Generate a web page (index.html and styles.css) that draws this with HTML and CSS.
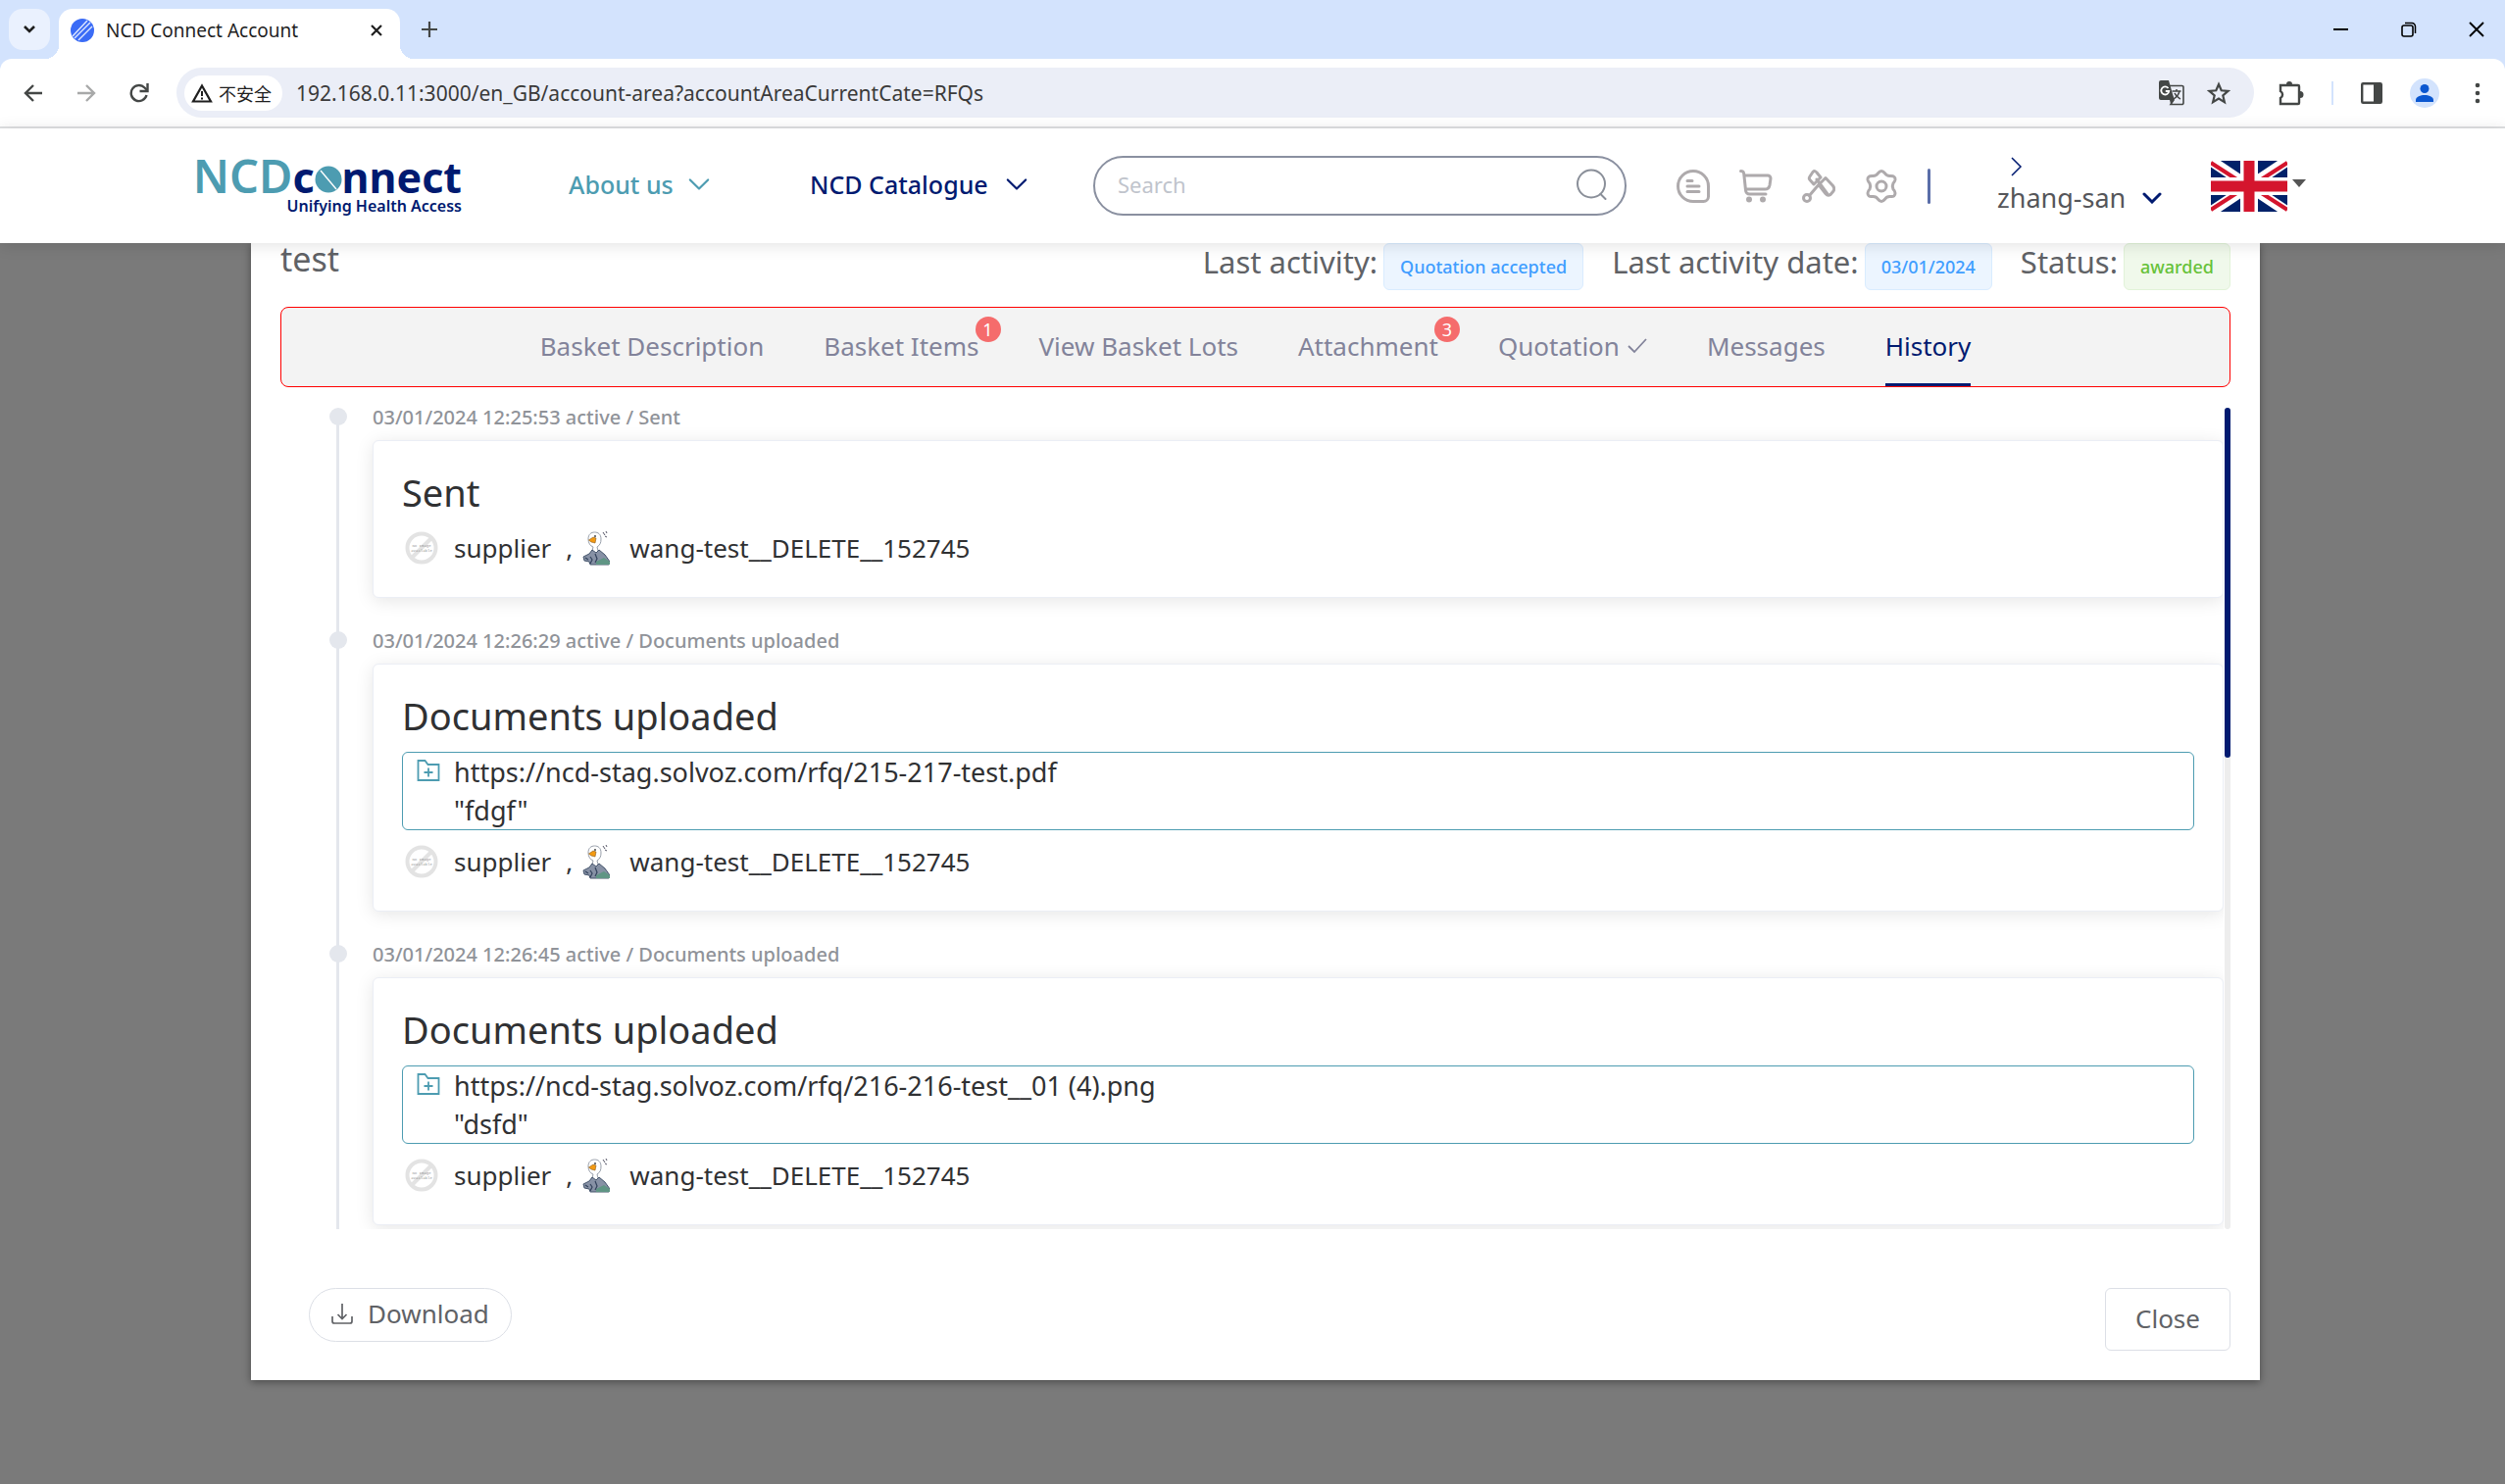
FILE: index.html
```html
<!DOCTYPE html>
<html lang="en">
<head>
<meta charset="utf-8">
<title>NCD Connect Account</title>
<link rel="stylesheet" href="styles.css">
</head>
<body>
<svg class="defs" aria-hidden="true">
  <symbol id="chevron" viewBox="0 0 24 14"><path d="M2 2l10 10L22 2" fill="none" stroke="currentColor" stroke-width="2.4" stroke-linecap="round" stroke-linejoin="round"/></symbol>
  <symbol id="no-image" viewBox="0 0 34 34">
    <circle cx="17" cy="17" r="14.5" fill="none" stroke="#e3e3e3" stroke-width="4"/>
    <path d="M7 27L27 7" stroke="#e3e3e3" stroke-width="4"/>
    <text x="17" y="16" text-anchor="middle" font-family="Liberation Mono, monospace" font-size="4" fill="#999">No Image</text>
    <text x="17" y="21" text-anchor="middle" font-family="Liberation Mono, monospace" font-size="4" fill="#999">available</text>
  </symbol>
  <symbol id="goose" viewBox="0 0 28 36">
    <path d="M11 17l-1 4-3 4h12l-3-4-1-4c3-2 4-4 4-8 0-5-3-7-6.500-7S6 4 6 9c0 4 2 7 5 8z" fill="#fff" stroke="#99a0ab" stroke-width="1"/>
    <path d="M6.500 10l4.500-3 3 1-1 5-4-1z" fill="#f39a12" stroke="#8a5a1c" stroke-width=".6"/>
    <circle cx="13" cy="6" r=".9" fill="#333"/>
    <path d="M21 2l2 3M24 1l1 2M23 6l2 1" stroke="#556" stroke-width="1"/>
    <path d="M10 20l-3 4-6 3 1 4 5 1 1 3h19l1-3-5-7-6-5-3 3z" fill="#8791a5" stroke="#44546b" stroke-width="1"/>
    <path d="M14 32l8-4 6 4v3H14z" fill="#5f9584"/>
    <path d="M3 28l3 2M8 27l2 3-2 4M13 24l2 5-2 4" stroke="#33435c" stroke-width="1.2" fill="none"/>
  </symbol>
  <symbol id="folder-plus" viewBox="0 0 24 24">
    <path d="M1.5 22V2h7l3 4h11v16z" fill="none" stroke="currentColor" stroke-width="1.8"/>
    <path d="M12 9.500v9M7.500 14h9" stroke="currentColor" stroke-width="1.800"/>
  </symbol>
</svg>

<header class="browser">
  <div class="tabstrip">
    <button class="tab-search" aria-label="Search tabs"><svg width="14" height="10" viewBox="0 0 14 10"><path d="M2 2l5 5 5-5" fill="none" stroke="#1f1f1f" stroke-width="2.600"/></svg></button>
    <div class="tab">
      <svg width="24" height="24" viewBox="0 0 24 24"><circle cx="12" cy="12" r="12" fill="#3b6cf6"/><path d="M2 18L17 2M4 20L20 4M8 22L22 8" stroke="#dfe8ff" stroke-width="1.400"/></svg>
      <span class="tab__title">NCD Connect Account</span>
      <button class="icon-button" aria-label="Close tab"><svg width="14" height="14" viewBox="0 0 14 14"><path d="M2 2l10 10M12 2L2 12" stroke="#1f1f1f" stroke-width="2.200"/></svg></button>
    </div>
    <button class="icon-button" aria-label="New tab"><svg width="18" height="18" viewBox="0 0 18 18"><path d="M9 1v16M1 9h16" stroke="#444746" stroke-width="2.200"/></svg></button>
    <div class="window-buttons">
      <button class="icon-button" aria-label="Minimise"><svg width="16" height="16" viewBox="0 0 16 16"><path d="M0 8h15" stroke="#000" stroke-width="2"/></svg></button>
      <button class="icon-button" aria-label="Restore"><svg width="16" height="16" viewBox="0 0 16 16"><rect x="1" y="4" width="11" height="11" rx="2" fill="none" stroke="#000" stroke-width="1.600"/><path d="M4 1.500h7a3.500 3.500 0 0 1 3.500 3.500v7" fill="none" stroke="#000" stroke-width="1.500"/></svg></button>
      <button class="icon-button" aria-label="Close window"><svg width="16" height="16" viewBox="0 0 16 16"><path d="M1 1l14 14M15 1L1 15" stroke="#000" stroke-width="1.800"/></svg></button>
    </div>
  </div>
  <div class="toolbar">
    <div class="toolbar__nav">
      <button class="icon-button" aria-label="Back"><svg width="20" height="20" viewBox="0 0 20 20"><path d="M19 10H3M10 2l-8 8 8 8" fill="none" stroke="#444746" stroke-width="2.400"/></svg></button>
      <button class="icon-button" aria-label="Forward"><svg width="20" height="20" viewBox="0 0 20 20"><path d="M1 10h16M10 2l8 8-8 8" fill="none" stroke="#a8a9a9" stroke-width="2.400"/></svg></button>
      <button class="icon-button" aria-label="Reload"><svg width="20" height="20" viewBox="0 0 20 20"><path d="M17.500 12A8 8 0 1 1 15.500 4.500L18 7" fill="none" stroke="#444746" stroke-width="2.400"/><path d="M18.500 0v8h-8" fill="none" stroke="#444746" stroke-width="2.400"/></svg></button>
    </div>
    <div class="omnibox">
      <span class="omnibox__chip">
        <svg width="22" height="20" viewBox="0 0 22 20"><path d="M11 2.500L20 18.500H2z" fill="none" stroke="#1f1f1f" stroke-width="2.200"/><path d="M11 8v5M11 14.500v2" stroke="#1f1f1f" stroke-width="2"/></svg>
        <span>不安全</span>
      </span>
      <input class="omnibox__url" type="text" aria-label="Address" value="192.168.0.11:3000/en_GB/account-area?accountAreaCurrentCate=RFQs">
      <button class="icon-button" aria-label="Translate"><svg width="26" height="26" viewBox="0 0 26 26"><path d="M2 0h8l4 14 2 6H2a2 2 0 0 1-2-2V2a2 2 0 0 1 2-2z" fill="#444746"/><path d="M11 5.500h12.500a1.500 1.500 0 0 1 1.500 1.500v16a1.500 1.500 0 0 1-1.500 1.500H12l3-4.500" fill="none" stroke="#444746" stroke-width="1.600"/><path d="M9.500 8a4 4 0 1 0 .8 3H6.800" fill="none" stroke="#fff" stroke-width="1.800"/><path d="M13.500 11h9M18 9v2M21 11c-1 4-3 6-6 8M16 13c1 3 3 4 6 6" stroke="#444746" stroke-width="1.500" fill="none"/><path d="M11 20h5l-4 4z" fill="#444746"/></svg></button>
      <button class="icon-button" aria-label="Bookmark"><svg width="24" height="24" viewBox="0 0 24 24"><path d="M12 3l2.700 6.300 6.800.6-5.200 4.500 1.600 6.700L12 17.500l-5.900 3.600 1.600-6.700-5.200-4.500 6.800-.6z" fill="none" stroke="#444746" stroke-width="2.200"/></svg></button>
    </div>
    <div class="toolbar__actions">
      <button class="icon-button" aria-label="Extensions"><svg width="26" height="26" viewBox="0 0 26 26"><path d="M2 5h18a1 1 0 0 1 1 1v17a1 1 0 0 1-1 1H2v-6a4 4 0 0 0 0-7z" fill="none" stroke="#444746" stroke-width="2.400"/><path d="M8 4a3 3 0 0 1 6 0zM22 11a3.500 3.500 0 0 1 0 7z" fill="#444746"/></svg></button>
      <span class="toolbar__rule"></span>
      <button class="icon-button" aria-label="Side panel"><svg width="22" height="22" viewBox="0 0 22 22"><rect x="1.200" y="1.200" width="19.600" height="19.600" rx="1" fill="none" stroke="#444746" stroke-width="2.400"/><path d="M13 1h8v20h-8z" fill="#444746"/></svg></button>
      <button class="icon-button" aria-label="Profile"><svg width="30" height="30" viewBox="0 0 30 30"><circle cx="15" cy="15" r="15" fill="#d3e3fd"/><circle cx="15" cy="10.500" r="4.500" fill="#0b57d0"/><path d="M6 24v-2c0-3.500 5-5 9-5s9 1.500 9 5v2z" fill="#0b57d0"/></svg></button>
      <button class="icon-button" aria-label="Menu"><svg width="6" height="22" viewBox="0 0 6 22"><g fill="#444746"><circle cx="3" cy="3" r="2.300"/><circle cx="3" cy="11" r="2.300"/><circle cx="3" cy="19" r="2.300"/></g></svg></button>
    </div>
  </div>
</header>

<header class="site">
  <a class="logo" href="#">
    <span class="logo__name"><span class="logo__ncd">NCD</span><span>c</span><svg width="28" height="28" viewBox="0 0 28 28"><circle cx="14" cy="14" r="13.500" fill="#4d9cb1"/><path d="M6 5l16 19" stroke="#fff" stroke-width="1.400"/></svg><span>nnect</span></span>
    <span class="logo__tagline">Unifying Health Access</span>
  </a>
  <nav class="nav">
    <a class="nav__link nav__link--teal" href="#">About us <svg width="22" height="14"><use href="#chevron"/></svg></a>
    <a class="nav__link" href="#">NCD Catalogue <svg width="22" height="14"><use href="#chevron"/></svg></a>
  </nav>
  <div class="search">
    <input class="search__input" type="search" placeholder="Search" aria-label="Search">
    <button class="icon-button" aria-label="Run search"><svg width="32" height="32" viewBox="0 0 32 32"><circle cx="16" cy="15.500" r="14" fill="none" stroke="#8a8f99" stroke-width="2"/><path d="M25.500 26l5 5" stroke="#8a8f99" stroke-width="2" stroke-linecap="round"/></svg></button>
  </div>
  <div class="shortcuts">
    <a href="#" aria-label="Requests"><svg width="34" height="34" viewBox="0 0 34 34"><path d="M17 1.500A15.500 15.500 0 0 0 17 32.500h10.500a5 5 0 0 0 5-5V17A15.500 15.500 0 0 0 17 1.500zM11 11.500h5M11 17h12M11 22.500h12"/></svg></a>
    <a href="#" aria-label="Basket"><svg width="34" height="34" viewBox="0 0 34 34"><path d="M1.500 1.500c2 0 3 .6 3.200 2.600L6.500 21a4 4 0 0 0 4 4H27M5.200 6H29a3 3 0 0 1 3 3l-1 7a5 5 0 0 1-5 4H7"/><circle cx="10" cy="30.500" r="1.500"/><circle cx="24" cy="30.500" r="1.500"/></svg></a>
    <a href="#" aria-label="Auctions"><svg width="34" height="34" viewBox="0 0 34 34"><circle cx="5" cy="29" r="3.500"/><path d="M7.500 26.500L19 13M15 10l11 15M8 7l3-4.500c1.500-1.500 3-1 4 .5l4 5-7 7-4-4.500c-1-1-1-2 0-3.500zM17 15.500l7-7 7.500 8c1.500 2 1.500 4 .5 5.500l-3 3.500c-1.500 1-3.500.8-5-1z"/></svg></a>
    <a href="#" aria-label="Settings"><svg width="34" height="34" viewBox="0 0 34 34"><circle cx="17" cy="17" r="5"/><path d="M13.500 3.800Q17-.6 20.500 3.800 22.500 7 26.500 6.500q5 0 4.500 4-.500 2-2 3.500-1.500 3 0 6 2 2 2 4 0 4-4.500 3.500-4-.5-6 2.700-3.500 4.400-7 0-2-3.200-6-2.700Q3 28 3 24q0-2 2-4 1.500-3 0-6-1.500-1.500-2-3.500-.5-4 4.500-4 4 .5 6-2.700z"/></svg></a>
  </div>
  <span class="site__rule"></span>
  <div class="user">
    <svg class="user__arrow" width="12" height="20" viewBox="0 0 12 20"><path d="M1 1l9 9-9 9" fill="none" stroke="currentColor" stroke-width="1.500"/></svg>
    <button class="user__name">zhang-san <svg width="20" height="12" viewBox="0 0 20 12"><path d="M2 2l8 8 8-8" fill="none" stroke="#001a70" stroke-width="3" stroke-linecap="round"/></svg></button>
  </div>
  <button class="language" aria-label="Language: English (UK)">
    <svg width="78" height="52" viewBox="0 0 78 52"><path d="M0 0h78v52H0z" fill="#012169"/><path d="M0 0l78 52M78 0L0 52" stroke="#fff" stroke-width="11"/><path d="M0 2l31 20M78 2L47 22M0 50l31-20M47 30l31 20" stroke="#d4152d" stroke-width="4"/><path d="M39 0v52M0 26h78" stroke="#fff" stroke-width="18"/><path d="M39 0v52M0 26h78" stroke="#d4152d" stroke-width="11"/></svg>
    <svg class="language__caret" width="14" height="8" viewBox="0 0 14 8"><path d="M0 0h14L7 8z" fill="#555"/></svg>
  </button>
</header>

<main class="backdrop">
  <section class="dialog">
    <div class="summary">
      <h1 class="summary__title">test</h1>
      <div class="summary__field">Last activity: <span class="tag">Quotation accepted</span></div>
      <div class="summary__field">Last activity date: <span class="tag">03/01/2024</span></div>
      <div class="summary__field">Status: <span class="tag tag--green">awarded</span></div>
    </div>
    <nav class="tabs">
      <a class="tabs__item" href="#">Basket Description</a>
      <a class="tabs__item" href="#">Basket Items<span class="badge">1</span></a>
      <a class="tabs__item" href="#">View Basket Lots</a>
      <a class="tabs__item" href="#">Attachment<span class="badge">3</span></a>
      <a class="tabs__item" href="#">Quotation <svg width="20" height="16" viewBox="0 0 20 16"><path d="M1 8l6 6L19 1" fill="none" stroke="currentColor" stroke-width="1.800"/></svg></a>
      <a class="tabs__item" href="#">Messages</a>
      <a class="tabs__item tabs__item--active" href="#" aria-current="page">History</a>
    </nav>
    <div class="history">
      <ol class="timeline">
        <li class="event">
          <time class="event__time">03/01/2024 12:25:53 active / Sent</time>
          <article class="card">
            <h2 class="card__title">Sent</h2>
            <p class="people"><svg width="34" height="34"><use href="#no-image"/></svg><span class="people__org">supplier</span><span class="people__comma">,</span><svg class="people__goose" width="28" height="36"><use href="#goose"/></svg><span>wang-test__DELETE__152745</span></p>
          </article>
        </li>
        <li class="event">
          <time class="event__time">03/01/2024 12:26:29 active / Documents uploaded</time>
          <article class="card">
            <h2 class="card__title">Documents uploaded</h2>
            <div class="file"><svg width="24" height="24"><use href="#folder-plus"/></svg><div><a href="#">https://ncd-stag.solvoz.com/rfq/215-217-test.pdf</a><p>"fdgf"</p></div></div>
            <p class="people"><svg width="34" height="34"><use href="#no-image"/></svg><span class="people__org">supplier</span><span class="people__comma">,</span><svg class="people__goose" width="28" height="36"><use href="#goose"/></svg><span>wang-test__DELETE__152745</span></p>
          </article>
        </li>
        <li class="event">
          <time class="event__time">03/01/2024 12:26:45 active / Documents uploaded</time>
          <article class="card">
            <h2 class="card__title">Documents uploaded</h2>
            <div class="file"><svg width="24" height="24"><use href="#folder-plus"/></svg><div><a href="#">https://ncd-stag.solvoz.com/rfq/216-216-test__01 (4).png</a><p>"dsfd"</p></div></div>
            <p class="people"><svg width="34" height="34"><use href="#no-image"/></svg><span class="people__org">supplier</span><span class="people__comma">,</span><svg class="people__goose" width="28" height="36"><use href="#goose"/></svg><span>wang-test__DELETE__152745</span></p>
          </article>
        </li>
      </ol>
      <div class="scrollbar"><div class="scrollbar__thumb"></div></div>
    </div>
    <footer class="actions">
      <button class="button button--round"><svg width="22" height="22" viewBox="0 0 22 22"><path d="M11 1v15M6.500 12l4.500 4.500 4.500-4.500M1 14v5a2 2 0 0 0 2 2h16a2 2 0 0 0 2-2v-5" fill="none" stroke="currentColor" stroke-width="1.700"/></svg>Download</button>
      <button class="button">Close</button>
    </footer>
  </section>
</main>
</body>
</html>
```

FILE: styles.css
```css
* { box-sizing: border-box; }

:root {
  --navy: #001a70;
  --teal: #4d9cb1;
  --text: #303133;
  --text-soft: #606266;
  --line: #e4e7ed;
}

body {
  margin: 0;
  min-height: 100vh;
  display: flex;
  flex-direction: column;
  background: #7a7a7a;
  color: var(--text);
  font: 26px/38px "Noto Sans", sans-serif;
}

h1, h2, p, ol { margin: 0; padding: 0; font-weight: 400; }
a { color: inherit; text-decoration: none; }
button { font: inherit; color: inherit; }
svg { flex: none; display: block; }

.defs { position: absolute; width: 0; height: 0; }

.icon-button { display: flex; padding: 0; border: 0; background: none; }

/* Browser window */
.browser { background: #d3e3fd; font-size: 19px; line-height: 24px; }

.tabstrip {
  display: flex;
  align-items: center;
  height: 60px;
  padding: 9px 21px 0 9px;
}

.tab-search {
  display: flex;
  align-items: center;
  justify-content: center;
  width: 42px;
  height: 42px;
  margin: 0 9px 9px 0;
  padding: 0;
  border: 0;
  border-radius: 14px;
  background: #eaf1fe;
}

.tab {
  position: relative;
  display: flex;
  align-items: center;
  gap: 12px;
  width: 348px;
  height: 51px;
  margin-right: 21px;
  padding: 0 17px 8px 12px;
  border-radius: 14px 14px 0 0;
  background: #fff;
}

.tab::before,
.tab::after {
  content: "";
  position: absolute;
  bottom: 0;
  width: 14px;
  height: 14px;
}

.tab::before { left: -14px; background: radial-gradient(circle at 0 0, transparent 14px, #fff 14px); }
.tab::after { right: -14px; background: radial-gradient(circle at 100% 0, transparent 14px, #fff 14px); }
.tab__title { flex: 1; color: #1f1f1f; }
.tabstrip > .icon-button { margin-bottom: 9px; }
.window-buttons { display: flex; gap: 53px; margin: 0 0 9px auto; }

.toolbar {
  display: flex;
  align-items: center;
  height: 71px;
  padding: 0 25px 0 24px;
  border-bottom: 2px solid #dfe0e2;
  border-radius: 12px 12px 0 0;
  background: #fff;
}

.toolbar__nav { display: flex; gap: 34px; margin-right: 28px; }

.omnibox {
  flex: 1;
  display: flex;
  align-items: center;
  gap: 23px;
  height: 51px;
  padding: 0 24px 0 8px;
  border-radius: 26px;
  background: #ebeef7;
}

.omnibox__chip {
  display: flex;
  align-items: center;
  gap: 6px;
  height: 36px;
  margin-right: -9px;
  padding: 0 11px 0 7px;
  border-radius: 18px;
  background: #fff;
  color: #1f1f1f;
  font-family: "Noto Sans CJK SC", sans-serif;
  font-size: 18px;
}

.omnibox__url {
  flex: 1;
  min-width: 0;
  padding: 0;
  border: 0;
  outline: 0;
  background: none;
  color: #3a3a3a;
  font: 21px/30px "Noto Sans", sans-serif;
}

.toolbar__actions { display: flex; align-items: center; gap: 28px; margin-left: 25px; }
.toolbar__rule { width: 2px; height: 24px; background: #d3e3fd; }
.toolbar__actions .icon-button:last-child { margin-left: 8px; }

/* Site header */
.site {
  position: relative;
  z-index: 1;
  display: flex;
  align-items: center;
  height: 117px;
  padding: 0 203px 0 195px;
  background: #fff;
  box-shadow: 0 2px 16px rgba(0, 0, 0, .12);
}

.logo {
  display: flex;
  flex-direction: column;
  align-items: flex-end;
  width: 276px;
  color: var(--navy);
}

.logo__name {
  display: flex;
  align-items: baseline;
  font-size: 43px;
  font-weight: 700;
  line-height: 38px;
}

.logo__ncd { color: var(--teal); font-size: 47px; font-weight: 600; }
.logo__tagline { font-size: 16px; font-weight: 600; line-height: 20px; }

.nav {
  display: grid;
  grid-template-columns: 144px 222px;
  gap: 102px;
  margin: 0 67px 3px 109px;
}

.nav__link {
  display: flex;
  align-items: center;
  justify-content: space-between;
  color: var(--navy);
  font-size: 25px;
  font-weight: 500;
}

.nav__link--teal { color: var(--teal); }

.search {
  flex: 1;
  display: flex;
  align-items: center;
  height: 61px;
  padding: 0 18px 3px 23px;
  border: 2px solid #8a90a0;
  border-radius: 31px;
}

.search__input {
  flex: 1;
  min-width: 0;
  padding: 0;
  border: 0;
  outline: 0;
  background: none;
  font: 22px/30px "Noto Sans", sans-serif;
}

.search__input::placeholder { color: #c0c4cc; opacity: 1; }

.shortcuts { display: flex; gap: 30px; margin: 0 30px 0 51px; }
.shortcuts path, .shortcuts circle {
  fill: none;
  stroke: #aeaaac;
  stroke-width: 3;
  stroke-linecap: round;
  stroke-linejoin: round;
}

.site__rule { width: 3px; height: 36px; border-radius: 2px; background: #5a6ea9; }

.user {
  display: flex;
  flex-direction: column;
  gap: 5px;
  width: 168px;
  margin: 0 50px 0 68px;
}

.user__arrow { margin-left: 14px; color: var(--navy); }

.user__name {
  display: flex;
  align-items: center;
  justify-content: space-between;
  padding: 0;
  border: 0;
  background: none;
  color: #55565a;
  font-size: 27px;
  line-height: 34px;
}

.language {
  display: flex;
  align-items: center;
  gap: 5px;
  padding: 0;
  border: 0;
  background: none;
}

.language__caret { margin-bottom: 6px; }

/* Dialog over the dimmed page */
.backdrop { flex: 1; padding: 0 250px 106px 256px; }

.dialog {
  padding: 0 30px 30px;
  background: #fff;
  box-shadow: 0 2px 8px rgba(0, 0, 0, .4);
}

.summary {
  display: flex;
  align-items: flex-start;
  gap: 29px;
  margin-bottom: 17px;
  color: var(--text-soft);
}

.summary__title { flex: 1; font-size: 34px; line-height: 32px; }
.summary__field { display: flex; gap: 6px; font-size: 31px; line-height: 38px; }

.tag {
  padding: 0 16px;
  border: 1px solid #d9ecff;
  border-radius: 6px;
  background: #ecf5ff;
  color: #409eff;
  font-size: 18px;
  font-weight: 500;
  line-height: 46px;
}

.tag--green { border-color: #e1f3d8; background: #f0f9eb; color: #67c23a; }

.tabs {
  display: flex;
  justify-content: center;
  gap: 61px;
  margin-bottom: 21px;
  border: 1px solid red;
  border-radius: 8px;
  background: #f3f3f3;
  color: #82839a;
}

.tabs__item {
  position: relative;
  display: flex;
  align-items: center;
  gap: 8px;
  height: 80px;
  border-bottom: 3px solid transparent;
}

.tabs__item--active { border-color: var(--navy); color: var(--navy); }

.badge {
  position: absolute;
  top: 9px;
  right: -22px;
  width: 26px;
  height: 26px;
  border-radius: 13px;
  background: #f56c6c;
  color: #fff;
  font-size: 18px;
  line-height: 26px;
  text-align: center;
}

/* History */
.history { display: flex; gap: 1px; max-height: 838px; }

.timeline {
  flex: 1;
  overflow: hidden;
  padding-left: 50px;
  list-style: none;
}

.event { position: relative; padding: 0 0 34px 44px; }

.event::before {
  content: "";
  position: absolute;
  top: 9px;
  left: 7px;
  width: 3px;
  height: 100%;
  background: var(--line);
}

.event::after {
  content: "";
  position: absolute;
  top: 0;
  left: 0;
  width: 18px;
  height: 18px;
  border-radius: 50%;
  background: var(--line);
}

.event__time {
  display: block;
  margin-bottom: 13px;
  color: #909399;
  font-size: 20px;
  font-weight: 500;
  line-height: 20px;
}

.card {
  padding: 30px 29px;
  border: 1px solid #ebeef5;
  border-radius: 6px;
  background: #fff;
  box-shadow: 0 3px 18px rgba(0, 0, 0, .1);
}

.card__title { margin-bottom: 15px; font-size: 38px; line-height: 44px; }

.file {
  display: flex;
  gap: 14px;
  margin-bottom: 12px;
  padding: 0 14px;
  border: 1px solid var(--teal);
  border-radius: 6px;
  font-size: 27px;
  line-height: 39px;
}

.file svg { margin-top: 6px; color: var(--teal); }

.people {
  display: flex;
  align-items: center;
  height: 40px;
  padding-left: 3px;
}

.people__org { margin: 0 15px 0 16px; }
.people__comma { margin-right: 10px; }
.people__goose { margin-right: 20px; }

.scrollbar { width: 6px; border-radius: 3px; background: #ededed; }
.scrollbar__thumb { height: 357px; border-radius: 3px; background: var(--navy); }

.actions {
  display: flex;
  align-items: flex-start;
  justify-content: space-between;
  margin-top: 60px;
  padding-left: 29px;
}

.button {
  display: flex;
  align-items: center;
  gap: 15px;
  height: 64px;
  padding: 0 30px 3px;
  border: 1px solid #dcdfe6;
  border-radius: 6px;
  background: #fff;
  color: var(--text-soft);
}

.button--round { height: 55px; padding: 0 22px 3px; border-radius: 28px; }
```
